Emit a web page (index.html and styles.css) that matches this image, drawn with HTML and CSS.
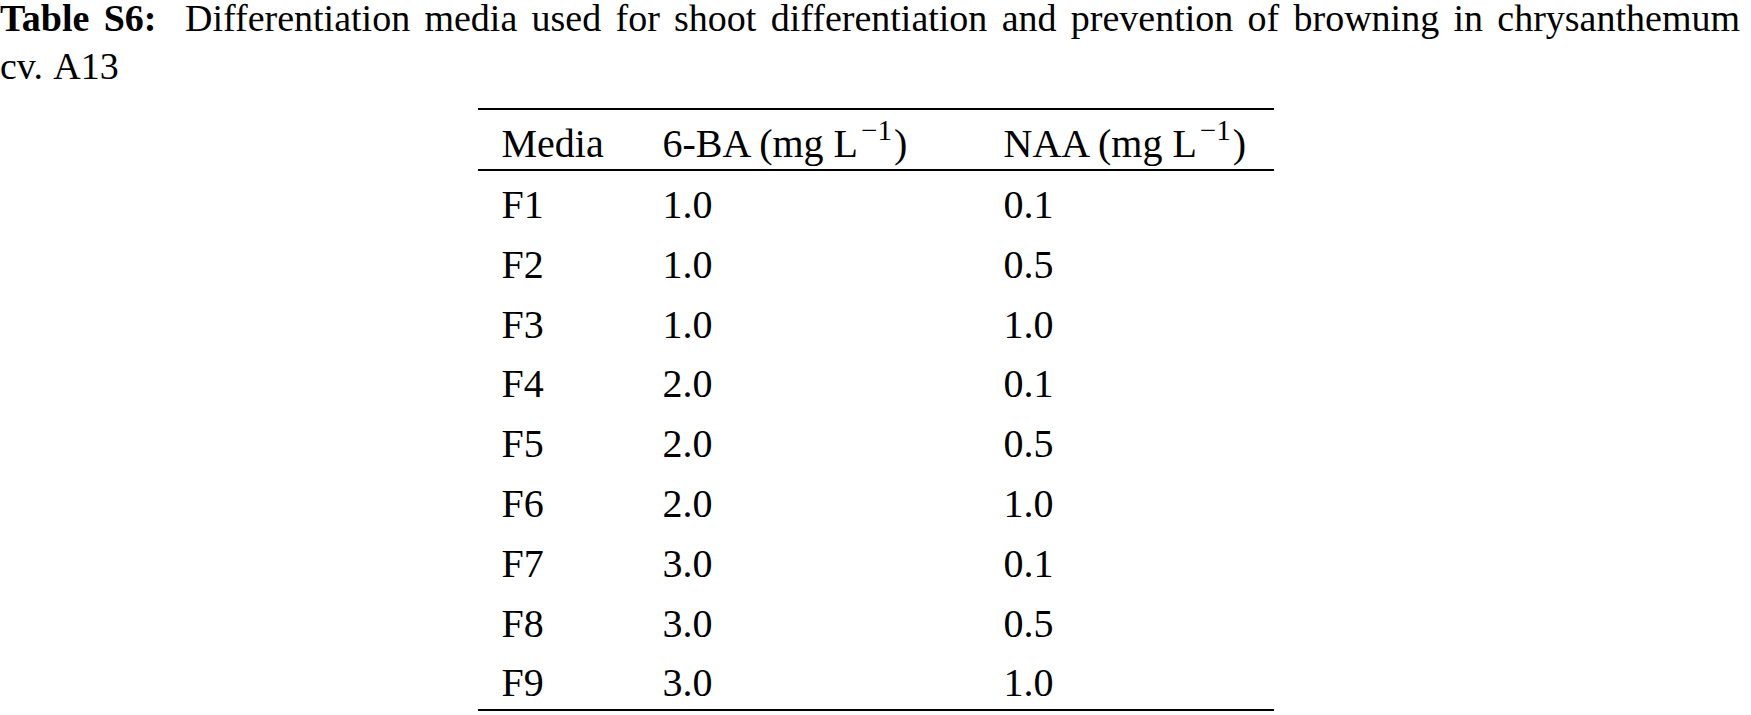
FILE: index.html
```html
<!DOCTYPE html>
<html lang="en">
<head>
<meta charset="utf-8">
<title>Table S6</title>
<link rel="stylesheet" href="styles.css">
</head>
<body>
<div class="page">
  <p class="caption"><b>Table S6:</b>&nbsp; Differentiation media used for shoot differentiation and prevention of browning in chrysanthemum cv. A13</p>
  <table class="data">
    <thead>
      <tr><th class="c1">Media</th><th class="c2">6-BA (mg L<sup>−1</sup>)</th><th class="c3">NAA (mg L<sup>−1</sup>)</th></tr>
    </thead>
    <tbody>
      <tr><td>F1</td><td>1.0</td><td>0.1</td></tr>
      <tr><td>F2</td><td>1.0</td><td>0.5</td></tr>
      <tr><td>F3</td><td>1.0</td><td>1.0</td></tr>
      <tr><td>F4</td><td>2.0</td><td>0.1</td></tr>
      <tr><td>F5</td><td>2.0</td><td>0.5</td></tr>
      <tr><td>F6</td><td>2.0</td><td>1.0</td></tr>
      <tr><td>F7</td><td>3.0</td><td>0.1</td></tr>
      <tr><td>F8</td><td>3.0</td><td>0.5</td></tr>
      <tr><td>F9</td><td>3.0</td><td>1.0</td></tr>
    </tbody>
  </table>
</div>
</body>
</html>
```

FILE: styles.css
```css
html, body {
  margin: 0;
  padding: 0;
  background: #ffffff;
}
body {
  font-family: "Liberation Serif", "Times New Roman", serif;
  color: #000000;
}
.page {
  width: 1751px;
}
.caption {
  margin: -6px 0 0 0;
  width: 1740px;
  font-size: 38px;
  line-height: 48px;
  text-align: justify;
  word-spacing: 3px;
}
.caption b {
  font-weight: bold;
}
.data {
  margin: 18px auto 0;
  width: 796px;
  border-collapse: separate;
  border-spacing: 0;
  border-top: 2px solid #000;
  border-bottom: 2px solid #000;
  font-size: 40px;
  table-layout: fixed;
}
.data th, .data td {
  text-align: left;
  font-weight: normal;
  padding: 12px 0 0 24px;
  line-height: 44px;
  vertical-align: top;
  box-sizing: border-box;
  white-space: nowrap;
}
.data th {
  height: 61px;
  border-bottom: 2px solid #000;
}
.data td {
  height: 59.8px;
}
.data .c1 { width: 161px; }
.data .c2 { width: 341px; }
.data .c3 { width: 294px; }
.data sup {
  font-size: 29px;
  line-height: 0;
  vertical-align: 17px;
  margin-left: 3px;
  margin-right: 2px;
}
```
